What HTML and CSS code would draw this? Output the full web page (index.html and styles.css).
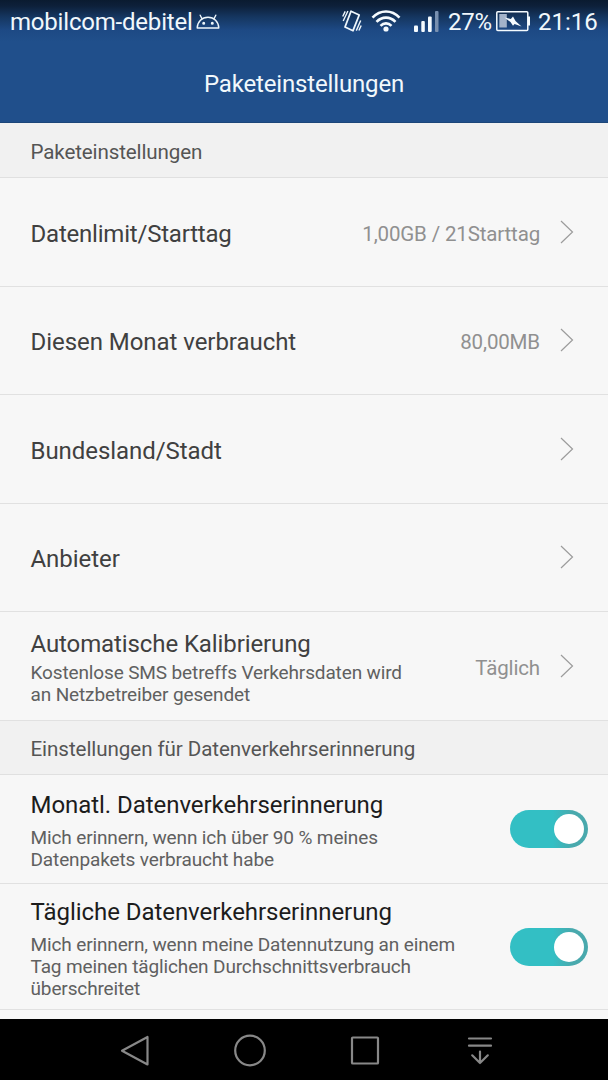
FILE: index.html
```html
<!DOCTYPE html>
<html lang="de">
<head>
<meta charset="utf-8">
<title>Paketeinstellungen</title>
<link rel="stylesheet" href="styles.css">
</head>
<body>
<div class="screen">
  <header class="header">
    <div class="status">
      <span class="carrier">mobilcom-debitel</span>
      <svg class="android" width="24" height="16" viewBox="0 0 24 16" fill="none" stroke="#eef6fb" stroke-width="1.400" stroke-linecap="round" stroke-linejoin="round"><path d="M1.200 14C1.400 7.600 6 3.200 12 3.200S22.600 7.600 22.800 14ZM6 4.800 4.200 1.200M18 4.800 19.800 1.200"/><circle cx="7.700" cy="9.300" r=".8" fill="#eef6fb"/><circle cx="16.300" cy="9.300" r=".8" fill="#eef6fb"/></svg>
      <svg class="vibrate" width="20" height="22" viewBox="0 0 20 22" fill="none" stroke="#eef6fb" stroke-width="1.800" stroke-linejoin="round"><path d="M9 1.200 17.200 5 11 20.700 3 17Z"/><path stroke-width="1.400" d="M5.900 1 1.200 11M3.200 1.400.7 6.500M18.700 10.500 14.300 20.600M19.200 15.500 16.900 20.500"/></svg>
      <svg class="wifi" width="30" height="22" viewBox="0 0 30 22" fill="none" stroke="#f5fbff" stroke-width="2.600"><path d="M1.500 7.600C9.300-.5 20.700-.5 28.500 7.600M5.500 11.800C11 6.200 19 6.200 24.500 11.800M9.500 15.800C12.700 12.600 17.300 12.600 20.500 15.800"/><circle cx="15" cy="19" r="2.600" fill="#f5fbff" stroke="none"/></svg>
      <svg class="signal" width="26" height="21" viewBox="0 0 26 21" fill="#f5fbff"><rect x="0" y="14.500" width="4" height="6.500" rx="1"/><rect x="7.300" y="10" width="3.500" height="11" rx="1"/><rect x="14" y="5.500" width="3.700" height="15.500" rx="1"/><rect x="21" y="0" width="3.500" height="21" rx="1" fill="#7890b0"/></svg>
      <span class="percent">27%</span>
      <svg class="battery" width="35" height="22" viewBox="0 0 35 22"><rect x=".8" y="1.800" width="31" height="18.800" rx="1" fill="none" stroke="#f5fbff" stroke-width="1.500"/><path d="M32 6.500H34V15.500H32Z" fill="#f5fbff"/><rect x="3.300" y="4" width="7.500" height="13.500" fill="#a3b3ca"/><path d="M8.500 7.500 14.800 9 17 6.500 19.500 11 25.500 16.500 18.600 14 17 15.800 14.500 12Z" fill="#f5fbff"/></svg>
      <span class="clock">21:16</span>
    </div>
    <h1 class="page-title">Paketeinstellungen</h1>
  </header>

  <main class="content">
    <h2 class="section">Paketeinstellungen</h2>
    <div class="row">
      <span class="title title-limit">Datenlimit/Starttag</span>
      <span class="value">1,00GB / 21Starttag</span>
      <svg class="chevron" width="14" height="24" viewBox="0 0 14 24"><path d="M1 1 12.500 12 1 23"/></svg>
    </div>
    <div class="row">
      <span class="title">Diesen Monat verbraucht</span>
      <span class="value">80,00MB</span>
      <svg class="chevron" width="14" height="24" viewBox="0 0 14 24"><path d="M1 1 12.500 12 1 23"/></svg>
    </div>
    <div class="row">
      <span class="title">Bundesland/Stadt</span>
      <svg class="chevron" width="14" height="24" viewBox="0 0 14 24"><path d="M1 1 12.500 12 1 23"/></svg>
    </div>
    <div class="row">
      <span class="title">Anbieter</span>
      <svg class="chevron" width="14" height="24" viewBox="0 0 14 24"><path d="M1 1 12.500 12 1 23"/></svg>
    </div>
    <div class="row">
      <div class="text">
        <span class="title title-calibration">Automatische Kalibrierung</span>
        <p class="summary">Kostenlose SMS betreffs Verkehrsdaten wird<br>an Netzbetreiber gesendet</p>
      </div>
      <span class="value">Täglich</span>
      <svg class="chevron" width="14" height="24" viewBox="0 0 14 24"><path d="M1 1 12.500 12 1 23"/></svg>
    </div>
    <h2 class="section section-second">Einstellungen für Datenverkehrserinnerung</h2>
    <div class="row row-switch row-monthly">
      <div class="text">
        <span class="title">Monatl. Datenverkehrserinnerung</span>
        <p class="summary">Mich erinnern, wenn ich über 90 % meines<br>Datenpakets verbraucht habe</p>
      </div>
      <span class="switch"><span class="knob"></span></span>
    </div>
    <div class="row row-switch row-daily">
      <div class="text">
        <span class="title">Tägliche Datenverkehrserinnerung</span>
        <p class="summary">Mich erinnern, wenn meine Datennutzung an einem<br>Tag meinen täglichen Durchschnittsverbrauch<br>überschreitet</p>
      </div>
      <span class="switch"><span class="knob"></span></span>
    </div>
  </main>

  <nav class="navbar">
    <svg width="30" height="34" viewBox="0 0 30 34"><path d="M27.500 3V30.500L2 16.700Z"/></svg>
    <svg width="34" height="34" viewBox="0 0 34 34"><circle cx="17" cy="16.500" r="14.800"/></svg>
    <svg width="30" height="34" viewBox="0 0 30 34"><rect x="2" y="3.500" width="26" height="26" rx=".8"/></svg>
    <svg width="26" height="34" viewBox="0 0 26 34"><path d="M2 4.500H24M2 11.700H24M13 17.500V29M5.200 21.300 13 29 20.800 21.300"/></svg>
  </nav>
</div>
</body>
</html>
```
FILE: styles.css
```css
* { box-sizing: border-box; }

body {
  margin: 0;
  background: #f7f7f7;
  font-family: Roboto, "Liberation Sans", sans-serif;
}

.screen {
  display: flex;
  flex-direction: column;
  width: 608px;
  height: 1080px;
  overflow: hidden;
}

.header {
  height: 123px;
  background: linear-gradient(#0a1b30 0, #0d203a 6px, #153660 17px, #1d4984 30px, #204f8b 42px);
  border-bottom: 1px solid #1c4679;
  color: #f1f8fc;
}

.status {
  display: flex;
  align-items: center;
  height: 44px;
  padding-left: 10px;
  font-size: 24px;
  line-height: 28px;
  white-space: nowrap;
}

.status svg { flex: none; }
.carrier { width: 183px; letter-spacing: -.2px; }
.android { margin-left: 3px; margin-top: -1px; }
.vibrate { margin-left: 122px; margin-top: -2px; }
.wifi { margin-left: 9px; margin-top: -2px; }
.signal { margin-left: 13px; margin-top: -2px; }
.percent { width: 45px; margin-left: 8px; letter-spacing: -.2px; }
.battery { margin-left: 3px; margin-top: -2px; }
.clock { margin-left: 7px; }

.page-title {
  margin: 26px 0 0;
  font-size: 24px;
  line-height: 28px;
  font-weight: 400;
  letter-spacing: -.16px;
  text-align: center;
}

.content { height: 896px; }

.section {
  display: flex;
  align-items: center;
  height: 55px;
  margin: 0;
  padding: 4px 0 0 30.500px;
  background: #f1f1f1;
  border-bottom: 1px solid #e0e0e0;
  color: #555;
  font-size: 20.600px;
  font-weight: 400;
  letter-spacing: -.14px;
}

.section-second {
  height: 54px;
  letter-spacing: -.08px;
}

.row {
  display: flex;
  align-items: center;
  height: 108.500px;
  padding: 4px 34px 0 30.500px;
  border-bottom: 1px solid #e1e1e1;
}

.text { flex: 1; }

.title {
  display: block;
  flex: 1;
  color: #404040;
  font-size: 24px;
  line-height: 28px;
  letter-spacing: -.05px;
  white-space: nowrap;
}

.title-limit { letter-spacing: -.21px; }
.title-calibration { letter-spacing: -.1px; }

.summary {
  margin: 4px 0 0;
  color: #606060;
  font-size: 19px;
  line-height: 22px;
  letter-spacing: -.13px;
  white-space: nowrap;
}

.value {
  color: #909090;
  font-size: 20.500px;
  letter-spacing: -.15px;
  white-space: nowrap;
}

.chevron {
  flex: none;
  margin: -4px 0 0 20px;
  fill: none;
  stroke: #9c9c9c;
  stroke-width: 1.200;
}

.row-switch {
  align-items: flex-start;
  padding-right: 20px;
}

.row-switch .title { color: #1c1c1c; }
.row-switch .summary { margin-top: 8px; }
.row-monthly { height: 109px; padding-top: 16px; }
.row-daily { height: 126px; padding-top: 14px; }

.switch {
  display: flex;
  justify-content: flex-end;
  flex: none;
  width: 78px;
  height: 38px;
  padding: 4px;
  border-radius: 19px;
  background: linear-gradient(90deg, #33bfc4 55%, #49a9ad 80%);
}

.row-monthly .switch { margin-top: 19px; }
.row-daily .switch { margin-top: 30px; }

.knob {
  width: 30px;
  height: 30px;
  border-radius: 50%;
  background: #fff;
}

.navbar {
  display: flex;
  flex: none;
  align-items: center;
  height: 61px;
  padding: 2px 0 0 120px;
  background: #000;
}

.navbar svg {
  fill: none;
  stroke: #888;
  stroke-width: 2.200;
  stroke-linecap: round;
  stroke-linejoin: round;
}

.navbar svg:nth-child(2) { margin-left: 83px; }
.navbar svg:nth-child(3) { margin-left: 83px; }
.navbar svg:nth-child(4) { margin-left: 87px; }
```
